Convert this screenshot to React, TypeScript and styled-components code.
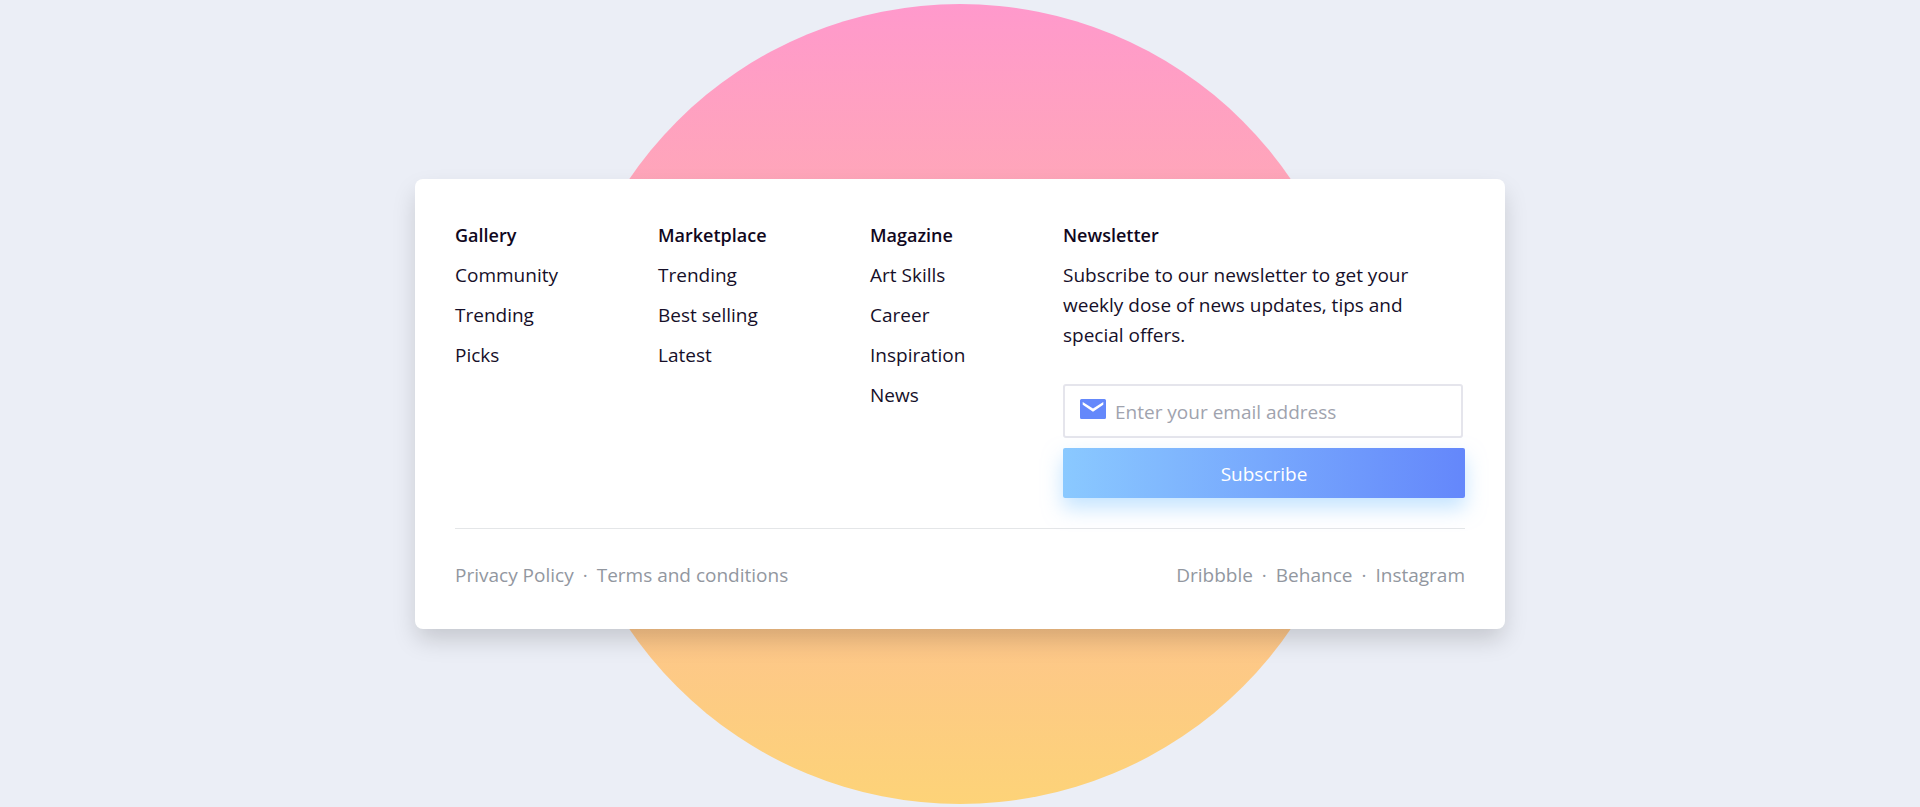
import React from "react";
import styled, { createGlobalStyle } from "styled-components";

const GlobalStyle = createGlobalStyle`
  *, *::before, *::after { box-sizing: border-box; }
  body {
    margin: 0;
    background: #ebeef6;
    color: #160f29;
    font-family: "Segoe UI", "Open Sans", "Noto Sans", sans-serif;
    font-size: 19px;
    font-weight: 400;
    line-height: 30px;
  }
`;

const Page = styled.div`
  position: relative;
  display: flex;
  align-items: center;
  justify-content: center;
  min-height: 100vh;
  overflow: hidden;
`;

const Sun = styled.div`
  position: absolute;
  top: 50%;
  left: 50%;
  width: 800px;
  height: 800px;
  border-radius: 50%;
  background: linear-gradient(to bottom, #ff99cc, #fdd378);
  transform: translate(-50%, -50%);
`;

const Card = styled.footer`
  position: relative;
  width: 100%;
  max-width: 1090px;
  padding: 40px 40px 39px;
  border-radius: 8px;
  background: #fff;
  box-shadow: 0 12px 24px -2px rgba(0, 0, 0, 0.17);
`;

const Columns = styled.div`
  display: grid;
  grid-template-columns: 103px 112px 93px 1fr;
  column-gap: 100px;
  padding-bottom: 30px;
  border-bottom: 1px solid #e4e6e8;
`;

const Heading = styled.h2`
  margin: 0 0 9px;
  font-size: 18px;
  font-weight: 600;
  line-height: 32px;
  color: #100720;
`;

const LinkList = styled.ul`
  display: flex;
  flex-direction: column;
  gap: 10px;
  margin: 0;
  padding: 0;
  list-style: none;
  white-space: nowrap;
`;

const TextLink = styled.a`
  color: inherit;
  text-decoration: none;
`;

const Blurb = styled.p`
  max-width: 360px;
  margin: 0 0 34px;
`;

const Form = styled.form`
  display: flex;
  flex-direction: column;
  gap: 10px;
`;

const Field = styled.label`
  display: flex;
  align-items: center;
  gap: 8px;
  height: 54px;
  margin-right: 2px;
  padding: 0 14px;
  border: 2px solid #e5e5ec;
  border-radius: 3px;
`;

const MailIcon = styled.svg`
  flex: none;
  width: 28px;
  height: 28px;
  margin-bottom: 4px;
  fill: #6488fb;
`;

const EmailInput = styled.input`
  flex: 1;
  min-width: 0;
  padding: 2px 0 0;
  border: 0;
  outline: 0;
  background: transparent;
  color: inherit;
  font: inherit;
  &::placeholder { color: #a0a3ae; opacity: 1; }
`;

const SubscribeButton = styled.button`
  height: 50px;
  padding: 2px 0 0;
  border: 0;
  border-radius: 2px;
  background: linear-gradient(to right, #8ac9ff, #6487fb);
  box-shadow: 0 10px 20px rgba(138, 201, 255, 0.5);
  color: #fff;
  font: inherit;
  cursor: pointer;
`;

const Bottom = styled.div`
  display: flex;
  justify-content: space-between;
  padding-top: 31px;
  color: #92979f;
`;

const InlineLinks = styled.nav`
  display: flex;
  gap: 9px;
`;

const groups = [
  { title: "Gallery", links: ["Community", "Trending", "Picks"] },
  { title: "Marketplace", links: ["Trending", "Best selling", "Latest"] },
  { title: "Magazine", links: ["Art Skills", "Career", "Inspiration", "News"] },
];

function DottedLinks({ label, items }: { label: string; items: string[] }) {
  return (
    <InlineLinks aria-label={label}>
      {items.map((item, i) => (
        <React.Fragment key={item}>
          {i > 0 && <span>·</span>}
          <TextLink href="#">{item}</TextLink>
        </React.Fragment>
      ))}
    </InlineLinks>
  );
}

export default function App() {
  return (
    <>
      <GlobalStyle />
      <Page>
        <Sun />
        <Card>
          <Columns>
            {groups.map((group) => (
              <section key={group.title}>
                <Heading>{group.title}</Heading>
                <LinkList>
                  {group.links.map((link) => (
                    <li key={link}>
                      <TextLink href="#">{link}</TextLink>
                    </li>
                  ))}
                </LinkList>
              </section>
            ))}
            <section>
              <Heading>Newsletter</Heading>
              <Blurb>
                Subscribe to our newsletter to get your weekly dose of news updates, tips and
                special offers.
              </Blurb>
              <Form onSubmit={(event) => event.preventDefault()}>
                <Field>
                  <MailIcon viewBox="0 0 28 28" aria-hidden="true">
                    <path
                      fillRule="evenodd"
                      d="M2.500 4H25.500A1.500 1.500 0 0 1 27 5.500V22.500A1.500 1.500 0 0 1 25.500 24H2.500A1.500 1.500 0 0 1 1 22.500V5.500A1.500 1.500 0 0 1 2.500 4ZM3.700 7V9.800L14 16.700L24.300 9.800V7L14 13.500Z"
                    />
                  </MailIcon>
                  <EmailInput type="email" aria-label="Email address" placeholder="Enter your email address" />
                </Field>
                <SubscribeButton type="submit">Subscribe</SubscribeButton>
              </Form>
            </section>
          </Columns>
          <Bottom>
            <DottedLinks label="Legal" items={["Privacy Policy", "Terms and conditions"]} />
            <DottedLinks label="Social" items={["Dribbble", "Behance", "Instagram"]} />
          </Bottom>
        </Card>
      </Page>
    </>
  );
}
